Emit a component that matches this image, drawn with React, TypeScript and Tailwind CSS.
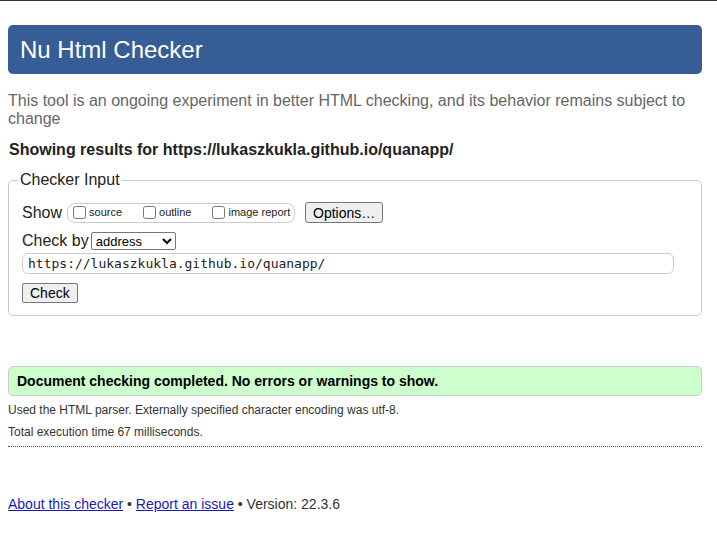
export default function App() {
  return (
    <div className="min-h-screen bg-white text-[#222] font-['Liberation_Sans',Arial,sans-serif] border-t border-[#333]">
      <div className="pl-2 pr-[15px] pt-6">
        {/* Title */}
        <h1 className="h-[49px] rounded-[5px] bg-[#365d95] text-white text-[24px] leading-[49px] pl-3">Nu Html Checker</h1>

        <p className="mt-[18px] text-[16px] leading-[18px] text-[#666]">
          This tool is an ongoing experiment in better HTML checking, and its behavior remains subject to change
        </p>

        <p className="mt-[13px] text-[16px] leading-[18px] font-bold pl-px">
          Showing results for https://lukaszkukla.github.io/quanapp/
        </p>

        {/* Checker input */}
        <fieldset className="mt-[12px] border border-[#ccc] rounded-[5px] pl-[13px] pr-[27px] pb-3">
          <legend className="text-[16px] leading-[18px] -ml-[4px] px-[2px]">Checker Input</legend>

          <div className="flex items-center mt-[13px] h-[21px]">
            <span className="text-[16px] leading-[18px]">Show</span>
            <div className="ml-[5px] h-[20px] w-[228px] border border-[#ccc] rounded-[8px] flex items-center pl-[5px] text-[11px] whitespace-nowrap">
              <label className="flex items-center">
                <input type="checkbox" className="w-[13px] h-[13px] m-0 mr-[3px]" />
                source
              </label>
              <label className="flex items-center ml-[21px]">
                <input type="checkbox" className="w-[13px] h-[13px] m-0 mr-[3px]" />
                outline
              </label>
              <label className="flex items-center ml-[21px]">
                <input type="checkbox" className="w-[13px] h-[13px] m-0 mr-[3px]" />
                image report
              </label>
            </div>
            <button className="ml-[10px] h-[21px] px-[7px] text-[14px] leading-none bg-[#efefef] border border-[#767676] rounded-[3px] text-black">
              Options…
            </button>
          </div>

          <div className="flex items-center mt-[8px] h-[20px]">
            <span className="text-[16px] leading-[18px]">Check by</span>
            <select className="ml-[2px] w-[85px] h-[18px] text-[13px] leading-none bg-white border border-[#767676] rounded-[2px] text-black">
              <option>address</option>
            </select>
          </div>

          <input
            type="text"
            readOnly
            value="https://lukaszkukla.github.io/quanapp/"
            className="mt-[2px] block w-full h-[21px] border border-[#ccc] rounded-[6px] px-[5px] text-[13px] font-['DejaVu_Sans_Mono',monospace] text-[#222] outline-none"
          />

          <button className="mt-[9px] block h-[20px] px-[7px] text-[14px] leading-none bg-[#efefef] border border-[#767676] rounded-[2px] text-black">
            Check
          </button>
        </fieldset>

        {/* Result */}
        <div className="mt-[50px] h-[30px] bg-[#ccffcc] border border-[#ccc] rounded-[5px] flex items-center pl-2 text-[14px] font-bold text-black">
          Document checking completed. No errors or warnings to show.
        </div>

        <p className="mt-[3px] text-[12px] leading-[22px] text-[#333]">Used the HTML parser. Externally specified character encoding was utf-8.</p>
        <p className="text-[12px] leading-[22px] text-[#333]">Total execution time 67 milliseconds.</p>
        <div className="mt-[3px] border-b border-dotted border-[#555]" />

        {/* Footer */}
        <p className="mt-[48px] text-[14px] leading-[18px] text-[#333]">
          <a href="#" className="text-[#1a1ab8] underline">About this checker</a>
          {' • '}
          <a href="#" className="text-[#1a1ab8] underline">Report an issue</a>
          {' • Version: 22.3.6'}
        </p>
      </div>
    </div>
  );
}
